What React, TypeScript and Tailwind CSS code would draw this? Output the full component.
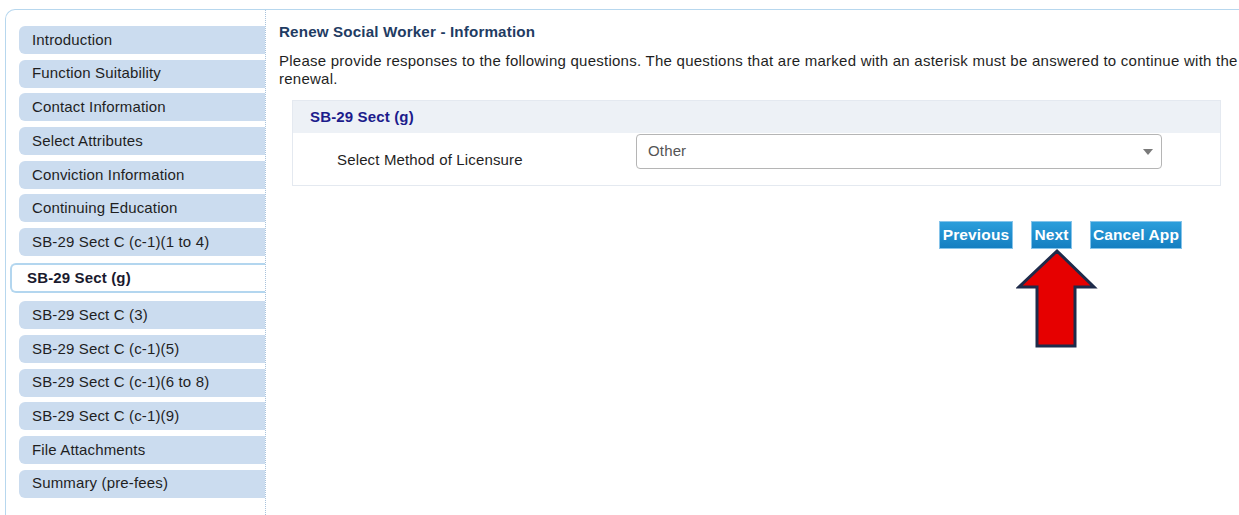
const steps = [
  'Introduction',
  'Function Suitability',
  'Contact Information',
  'Select Attributes',
  'Conviction Information',
  'Continuing Education',
  'SB-29 Sect C (c-1)(1 to 4)',
  'SB-29 Sect (g)',
  'SB-29 Sect C (3)',
  'SB-29 Sect C (c-1)(5)',
  'SB-29 Sect C (c-1)(6 to 8)',
  'SB-29 Sect C (c-1)(9)',
  'File Attachments',
  'Summary (pre-fees)',
];

const current = 'SB-29 Sect (g)';

const StepNav = () => (
  <aside className="w-[260px] shrink-0 border-r border-dotted border-[#a9c3dc] pt-[16px]">
    {steps.map((step) =>
      step === current ? (
        <div
          key={step}
          className="ml-[4px] mt-[7px] mb-[8px] h-[30px] flex items-center pl-[15px] bg-white border-2 border-r-0 border-[#b3d6ef] rounded-l-[6px] font-bold text-[#1a1a2e]"
        >
          {step}
        </div>
      ) : (
        <div
          key={step}
          className="ml-[13px] mb-[5.7px] h-[28px] flex items-center pl-[13px] bg-[#cbdcef] rounded-l-[6px] text-[#1f1f1f]"
        >
          {step}
        </div>
      ),
    )}
  </aside>
);

const Button = ({ label, width }: { label: string; width: string }) => (
  <button
    className={`${width} h-[28px] text-center text-[15.5px] font-bold text-white bg-gradient-to-b from-[#2c9edb] to-[#147fc1] border border-[#86c4ea]`}
  >
    {label}
  </button>
);

export default function App() {
  return (
    <div
      className="relative w-[1239px] h-[515px] overflow-hidden bg-white pt-[9px] pl-[5px] text-[15px] tracking-[0.15px]"
      style={{ fontFamily: '"Liberation Sans", Arial, sans-serif' }}
    >
      <div className="flex h-[520px] border-t border-l border-[#b7d7ee] rounded-tl-[10px]">
        <StepNav />

        <main className="flex-1 pl-[13px] pt-[13px]">
          <h2 className="text-[15.2px] leading-[18px] font-bold text-[#1f3c63]">
            Renew Social Worker - Information
          </h2>
          <p className="mt-[11px] leading-[18px] tracking-[0.25px] text-[#1f1f1f]">
            Please provide responses to the following questions. The questions that are marked with an asterisk must be
            answered to continue with the renewal.
          </p>

          <section className="mt-[12px] ml-[13px] mr-[18px] border border-[#e4e9f0]">
            <div className="h-[32px] flex items-center pl-[17px] bg-[#edf1f6] font-bold text-[#1c1c8c]">
              SB-29 Sect (g)
            </div>
            <div className="flex items-start pt-[1px] pb-[16px]">
              <label className="w-[343px] pl-[44px] pt-[17px] leading-[18px] text-[#1f1f1f]">
                Select Method of Licensure
              </label>
              <div className="w-[526px] h-[35px] flex items-center justify-between pl-[11px] pr-[8px] border border-[#b5b5b5] rounded-[4px] text-[#555]">
                <span>Other</span>
                <span className="w-0 h-0 border-l-[5px] border-r-[5px] border-t-[6px] border-l-transparent border-r-transparent border-t-[#7a7a7a]" />
              </div>
            </div>
          </section>

          <div className="mt-[35px] flex justify-end gap-[18px] pr-[57px]">
            <Button label="Previous" width="w-[74px]" />
            <Button label="Next" width="w-[41px]" />
            <Button label="Cancel App" width="w-[92px]" />
          </div>
        </main>
      </div>

      {/* pointer arrow under the Next button */}
      <svg className="absolute left-[1016px] top-[247px]" width="82" height="103" viewBox="0 0 82 103">
        <polygon
          points="41,4 3,40 21,40 21,99 59,99 59,40 78,40"
          fill="#e60000"
          stroke="#1e2b4a"
          strokeWidth="3"
          strokeLinejoin="miter"
        />
      </svg>
    </div>
  );
}
